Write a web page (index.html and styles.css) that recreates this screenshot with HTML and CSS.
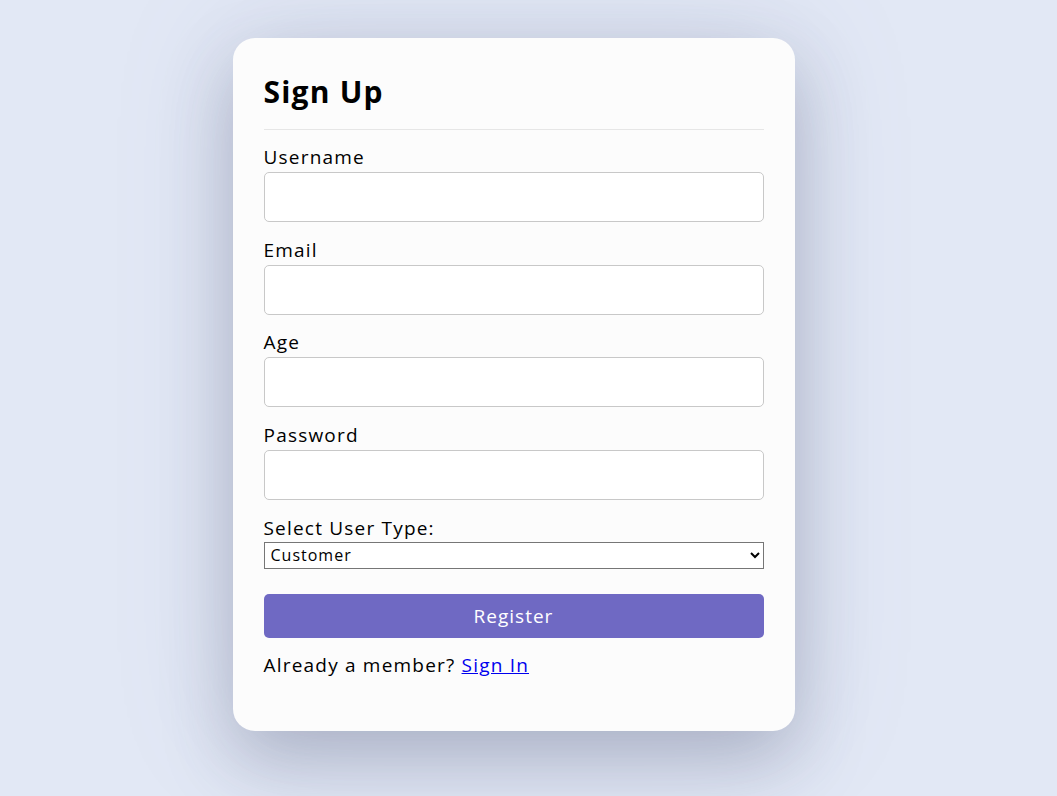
FILE: index.html
```html
<!DOCTYPE html>
<html lang="en">
<head>
<meta charset="utf-8">
<title>Sign Up</title>
<link rel="stylesheet" href="styles.css">
</head>
<body>
<main class="page">
  <form class="card">
    <h2 class="title">Sign Up</h2>
    <div class="divider"></div>
    <label class="label" for="username">Username</label>
    <input class="field" id="username" type="text">
    <label class="label" for="email">Email</label>
    <input class="field" id="email" type="email">
    <label class="label" for="age">Age</label>
    <input class="field" id="age" type="number">
    <label class="label" for="password">Password</label>
    <input class="field" id="password" type="password">
    <label class="label label-select" for="type">Select User Type:</label>
    <select class="select" id="type">
      <option>Customer</option>
      <option>Seller</option>
    </select>
    <button class="btn" type="button">Register</button>
    <p class="footer">Already a member? <a href="#" class="link">Sign In</a></p>
  </form>
</main>
</body>
</html>
```
FILE: styles.css
```css
* { box-sizing: border-box; }
html, body { margin: 0; padding: 0; }
body {
  background: #e2e8f5;
  font-family: "Open Sans", "Noto Sans", sans-serif;
  color: #000;
  min-height: 796px;
}
.page {
  display: flex;
  justify-content: center;
  padding: 38px 30px 0 0;
}
.card {
  width: 562px;
  background: #fcfcfc;
  border-radius: 22px;
  padding: 32px 31px 53px;
  display: flex;
  flex-direction: column;
  box-shadow: 0 30px 70px rgba(60, 70, 100, 0.28), 0 0 120px rgba(120, 130, 170, 0.18);
}
.title {
  margin: 0;
  font-size: 30px;
  font-weight: 700;
  line-height: 44px;
  letter-spacing: 1.2px;
}
.divider {
  height: 1px;
  background: #e6e6e6;
  margin-top: 15px;
  margin-bottom: 14px;
}
.label {
  font-size: 19px;
  line-height: 26px;
  margin-bottom: 2px;
  letter-spacing: 1.2px;
}
.label-select { margin-bottom: 1px; }
.field {
  height: 50px;
  border: 1px solid #c8c8c8;
  border-radius: 5px;
  background: #fff;
  margin: 0 0 14.7px;
  font-size: 16px;
  padding: 0 10px;
}
.select {
  height: 27px;
  border: 1px solid #767676;
  border-radius: 0;
  background: #fff;
  font-family: inherit;
  font-size: 16px;
  letter-spacing: 1px;
  padding: 0 2px;
  margin: 0;
  color: #000;
}
.btn {
  margin-top: 25px;
  height: 44px;
  border: none;
  border-radius: 5px;
  background: #6f69c3;
  color: #fff;
  font-family: inherit;
  font-size: 19px;
  letter-spacing: 1px;
}
.footer {
  margin: 14px 0 0;
  font-size: 19px;
  line-height: 26px;
  letter-spacing: 1.2px;
}
.link { color: #0000ee; }
```
